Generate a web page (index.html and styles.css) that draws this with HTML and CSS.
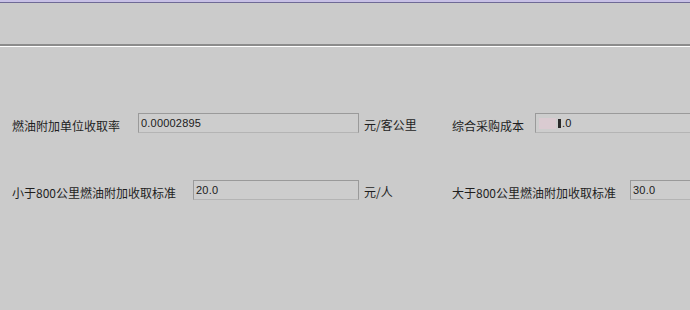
FILE: index.html
```html
<!DOCTYPE html>
<html>
<head>
  <meta charset="utf-8">
  <title>燃油附加设置</title>
  <link rel="stylesheet" href="styles.css">
</head>
<body>
  <div class="titlebar"></div>
  <div class="toolbar"></div>

  <div class="form">
    <div class="row">
      <span class="label w-rate">燃油附加单位收取率</span>
      <div class="field w-f1">0.00002895</div>
      <span class="unit">元/客公里</span>
      <span class="label w-cost">综合采购成本</span>
      <div class="field w-wide"><span class="blur"></span><span class="mark"></span>.0</div>
    </div>

    <div class="row">
      <span class="label w-under">小于800公里燃油附加收取标准</span>
      <div class="field w-f2">20.0</div>
      <span class="unit">元/人</span>
      <span class="label w-over">大于800公里燃油附加收取标准</span>
      <div class="field w-wide">30.0</div>
    </div>
  </div>
</body>
</html>
```

FILE: styles.css
```css
html, body {
  margin: 0;
  height: 100%;
  overflow: hidden;
}
body {
  background: #cbcbcb;
  font-family: "Noto Sans CJK SC", "DejaVu Sans", sans-serif;
  font-size: 12px;
  color: #1e1e1e;
}
.titlebar {
  height: 2px;
  background: #c8c1e6;
  border-bottom: 1px solid #6f6a96;
}
.toolbar {
  height: 41px;
  border-bottom: 2px solid #8c8c8c;
  box-shadow: 0 1px 0 #ffffff;
}
.form {
  padding: 67px 0 0 12px;
}
.row {
  display: flex;
  align-items: center;
  white-space: nowrap;
  margin-bottom: 47px;
}
.label {
  flex: none;
  line-height: 14px;
  padding-top: 6px;
}
.w-rate { width: 126px; }
.w-cost { width: 83px; }
.w-under { width: 181px; }
.w-over { width: 178px; }
.unit {
  flex: none;
  width: 88px;
  margin-left: 5px;
  line-height: 14px;
  padding-top: 3px;
}
.field {
  flex: none;
  box-sizing: border-box;
  height: 20px;
  padding-left: 2px;
  border: 1px solid #9a9a9a;
  border-bottom-color: #b4b4b4;
  background: #cdcdcd;
  font-family: "Liberation Sans", Arial, sans-serif;
  font-size: 11px;
  letter-spacing: 0.2px;
  color: #202020;
  display: flex;
  align-items: center;
}
.w-f1 { width: 221px; }
.w-f2 { width: 166px; }
.w-wide {
  flex: 1;
  border-right: none;
}
.blur {
  width: 17px;
  height: 11px;
  margin-left: 1px;
  background: #dacbd1;
}
.mark {
  width: 3px;
  height: 9px;
  margin-left: 2px;
  margin-right: 1px;
  background: #2a2a2a;
}
```
